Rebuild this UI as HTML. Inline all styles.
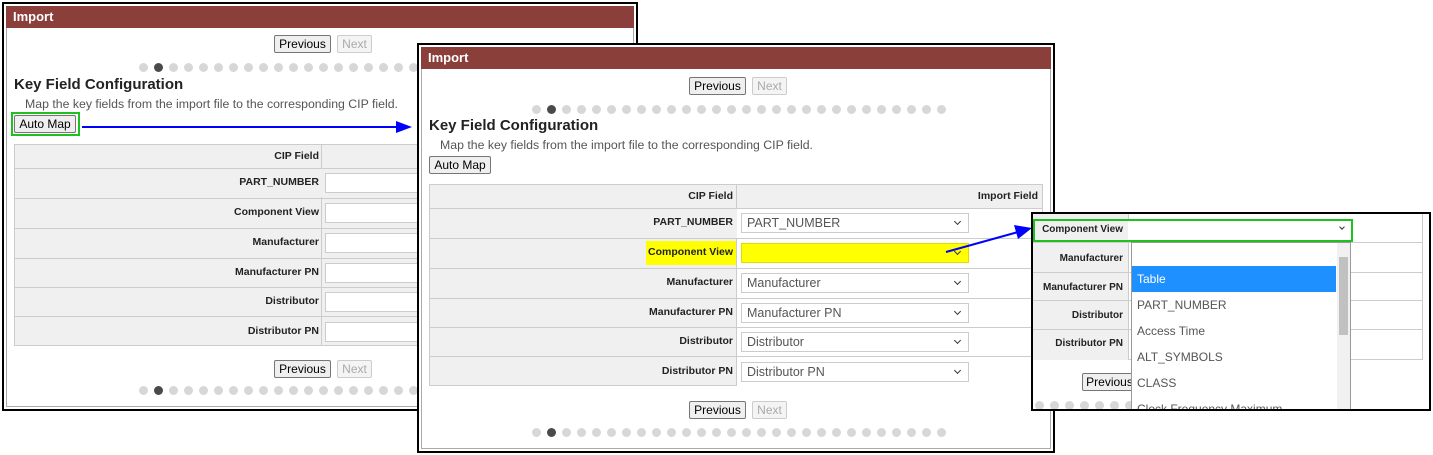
<!DOCTYPE html>
<html><head><meta charset="utf-8"><style>
*{box-sizing:border-box;margin:0;padding:0}
body{width:1433px;height:455px;background:#fff;position:relative;overflow:hidden;font-family:"Liberation Sans",sans-serif}
.a{position:absolute}
.panel{position:absolute;border:2px solid #000;background:#fff;overflow:hidden}
.hdr{position:absolute;left:2px;right:2px;top:2px;height:22px;background:#8b3f3b;color:#fff;font-weight:bold;font-size:13px;line-height:22px;padding-left:7px}
.inner{position:absolute;left:2px;right:2px;top:24px;bottom:2px;border:1px solid #aaa;border-top:none}
.btn{position:absolute;height:18px;border:1px solid #767676;background:#efefef;font-size:12px;line-height:16px;text-align:center;color:#000;border-radius:2px}
.btn.dis{color:#aaa;border-color:#ccc;background:#f4f4f4}
.dots{position:absolute;height:10px;white-space:nowrap}
.dots i{display:inline-block;width:9px;height:9px;border-radius:50%;background:#d7d7d7;margin-right:6px}
.dots i.on{background:#4a4a4a}
.title{position:absolute;font-size:15px;font-weight:bold;color:#222}
.sub{position:absolute;font-size:12.3px;color:#555}
.tbl{position:absolute;border:1px solid #ccc;background:#f0f0f0}
.row{position:absolute;left:0;right:0;border-top:1px solid #ccc}
.lbl{position:absolute;font-size:10.5px;font-weight:bold;color:#222;text-align:right;white-space:nowrap}
.sel{position:absolute;height:20px;border:1px solid #ccc;background:#fff;font-size:12.5px;color:#555;line-height:18px;padding-left:5px}
.sel:after{content:"";position:absolute;right:8px;top:5px;width:4px;height:4px;border-right:1.5px solid #333;border-bottom:1.5px solid #333;transform:rotate(45deg)}
.inp{position:absolute;height:20px;border:1px solid #ccc;background:#fff}
.dd div{height:26px;line-height:26px;padding-left:5px;font-size:12px;color:#555}
</style></head><body>

<!-- Panel 1 -->
<div class="panel" style="left:2px;top:2px;width:636px;height:409px">
 <div class="hdr">Import</div><div class="inner"></div>
 <div class="btn" style="left:270px;top:31px;width:57px">Previous</div>
 <div class="btn dis" style="left:333px;top:31px;width:35px">Next</div>
 <div class="dots" style="left:135px;top:55px;width:600px"><i></i><i class="on"></i><i></i><i></i><i></i><i></i><i></i><i></i><i></i><i></i><i></i><i></i><i></i><i></i><i></i><i></i><i></i><i></i><i></i><i></i><i></i><i></i><i></i><i></i></div>
 <div class="title" style="left:10px;top:72px">Key Field Configuration</div>
 <div class="sub" style="left:21px;top:93px">Map the key fields from the import file to the corresponding CIP field.</div>
 <div class="a" style="left:7px;top:108px;width:69px;height:24px;border:2px solid #1fc11f"></div>
 <div class="btn" style="left:10px;top:111px;width:62px">Auto Map</div>
 <div class="tbl" style="left:10px;top:140px;width:640px;height:202px">
  <div class="a" style="left:306px;top:0;bottom:0;width:1px;background:#ccc"></div>
  <div class="a" style="left:307px;top:0;width:400px;height:23px;background:#f0f0f0"></div>
  <div class="lbl" style="right:334px;top:5px">CIP Field</div>
  <div class="row" style="top:23px;height:29px;background:#f0f0f0"><div class="lbl" style="right:334px;top:7px">PART_NUMBER</div><div class="inp" style="left:310px;top:4px;width:300px"></div></div>
  <div class="row" style="top:53px;height:29px"><div class="lbl" style="right:334px;top:7px">Component View</div><div class="inp" style="left:310px;top:4px;width:300px"></div></div>
  <div class="row" style="top:83px;height:29px"><div class="lbl" style="right:334px;top:7px">Manufacturer</div><div class="inp" style="left:310px;top:4px;width:300px"></div></div>
  <div class="row" style="top:113px;height:29px"><div class="lbl" style="right:334px;top:7px">Manufacturer PN</div><div class="inp" style="left:310px;top:4px;width:300px"></div></div>
  <div class="row" style="top:142px;height:29px"><div class="lbl" style="right:334px;top:7px">Distributor</div><div class="inp" style="left:310px;top:4px;width:300px"></div></div>
  <div class="row" style="top:171px;height:30px"><div class="lbl" style="right:334px;top:8px">Distributor PN</div><div class="inp" style="left:310px;top:5px;width:300px"></div></div>
 </div>
 <div class="btn" style="left:270px;top:356px;width:57px">Previous</div>
 <div class="btn dis" style="left:333px;top:356px;width:35px">Next</div>
 <div class="dots" style="left:135px;top:378px;width:600px"><i></i><i class="on"></i><i></i><i></i><i></i><i></i><i></i><i></i><i></i><i></i><i></i><i></i><i></i><i></i><i></i><i></i><i></i><i></i><i></i><i></i><i></i><i></i><i></i><i></i></div>
</div>

<!-- arrow 1 -->
<svg class="a" style="left:0;top:0" width="1433" height="455"><line x1="82" y1="127" x2="398" y2="127" stroke="#0000ff" stroke-width="2"/><polygon points="396,121 412,127 396,133" fill="#0000ff"/></svg>

<!-- Panel 2 -->
<div class="panel" style="left:417px;top:43px;width:638px;height:410px">
 <div class="hdr">Import</div><div class="inner"></div>
 <div class="btn" style="left:270px;top:32px;width:57px">Previous</div>
 <div class="btn dis" style="left:333px;top:32px;width:35px">Next</div>
 <div class="dots" style="left:113px;top:56px;width:600px"><i></i><i class="on"></i><i></i><i></i><i></i><i></i><i></i><i></i><i></i><i></i><i></i><i></i><i></i><i></i><i></i><i></i><i></i><i></i><i></i><i></i><i></i><i></i><i></i><i></i><i></i><i></i><i></i><i></i></div>
 <div class="title" style="left:10px;top:72px">Key Field Configuration</div>
 <div class="sub" style="left:21px;top:93px">Map the key fields from the import file to the corresponding CIP field.</div>
 <div class="btn" style="left:10px;top:111px;width:62px">Auto Map</div>
 <div class="tbl" style="left:10px;top:139px;width:614px;height:202px">
  <div class="a" style="left:306px;top:0;bottom:0;width:1px;background:#ccc"></div>
  <div class="a" style="left:307px;top:0;right:0;height:23px;background:#f0f0f0"></div>
  <div class="lbl" style="right:309px;top:5px">CIP Field</div>
  <div class="lbl" style="right:4px;top:5px">Import Field</div>
  <div class="row" style="top:23px;height:30px;background:#f0f0f0"><div class="a" style="left:307px;right:0;top:0;bottom:0;background:#fff"></div><div class="lbl" style="right:309px;top:7px">PART_NUMBER</div><div class="sel" style="left:311px;top:4px;width:228px">PART_NUMBER</div></div>
  <div class="row" style="top:53px;height:30px"><div class="a" style="left:307px;right:0;top:0;bottom:0;background:#fff"></div><div class="a" style="left:216px;top:2px;width:90px;height:24px;background:#ffff00"></div><div class="lbl" style="right:309px;top:7px">Component View</div><div class="sel" style="left:311px;top:4px;width:228px;background:#ffff00;border-color:#dddd00"></div></div>
  <div class="row" style="top:83px;height:30px"><div class="a" style="left:307px;right:0;top:0;bottom:0;background:#fff"></div><div class="lbl" style="right:309px;top:7px">Manufacturer</div><div class="sel" style="left:311px;top:4px;width:228px">Manufacturer</div></div>
  <div class="row" style="top:113px;height:30px"><div class="a" style="left:307px;right:0;top:0;bottom:0;background:#fff"></div><div class="lbl" style="right:309px;top:7px">Manufacturer PN</div><div class="sel" style="left:311px;top:4px;width:228px">Manufacturer PN</div></div>
  <div class="row" style="top:142px;height:30px"><div class="a" style="left:307px;right:0;top:0;bottom:0;background:#fff"></div><div class="lbl" style="right:309px;top:7px">Distributor</div><div class="sel" style="left:311px;top:4px;width:228px">Distributor</div></div>
  <div class="row" style="top:171px;height:30px"><div class="a" style="left:307px;right:0;top:0;bottom:0;background:#fff"></div><div class="lbl" style="right:309px;top:8px">Distributor PN</div><div class="sel" style="left:311px;top:5px;width:228px">Distributor PN</div></div>
 </div>
 <div class="btn" style="left:270px;top:356px;width:57px">Previous</div>
 <div class="btn dis" style="left:333px;top:356px;width:35px">Next</div>
 <div class="dots" style="left:113px;top:379px;width:600px"><i></i><i class="on"></i><i></i><i></i><i></i><i></i><i></i><i></i><i></i><i></i><i></i><i></i><i></i><i></i><i></i><i></i><i></i><i></i><i></i><i></i><i></i><i></i><i></i><i></i><i></i><i></i><i></i><i></i></div>
</div>

<!-- arrow 2 -->
<svg class="a" style="left:0;top:0" width="1433" height="455"><line x1="946" y1="252" x2="1018" y2="232" stroke="#0000ff" stroke-width="2"/><polygon points="1014,225 1032,228 1018,239" fill="#0000ff"/></svg>

<!-- Panel 3 -->
<div class="panel" style="left:1031px;top:212px;width:400px;height:199px">
 <div class="a" style="left:0;top:0;width:390px;height:146px;border-right:1px solid #ccc;border-bottom:1px solid #ccc"></div>
 <div class="a" style="left:0;top:0;width:96px;height:146px;background:#f0f0f0;border-right:1px solid #ccc"></div>
 <div class="a" style="left:0;top:28px;width:390px;height:1px;background:#ccc"></div>
 <div class="a" style="left:0;top:58px;width:390px;height:1px;background:#ccc"></div>
 <div class="a" style="left:0;top:86px;width:390px;height:1px;background:#ccc"></div>
 <div class="a" style="left:0;top:115px;width:390px;height:1px;background:#ccc"></div>
 <div class="a" style="left:0;top:5px;width:320px;height:23px;border:2px solid #1fc11f;background:#fff"></div>
 <div class="a" style="left:2px;top:7px;width:93px;height:19px;background:#f0f0f0"></div>
 <div class="lbl" style="right:306px;top:10px;font-size:10px">Component View</div>
 <div class="a" style="left:307px;top:11px;width:4px;height:4px;border-right:1.5px solid #333;border-bottom:1.5px solid #333;transform:rotate(45deg)"></div>
 <div class="lbl" style="right:306px;top:39px;font-size:10px">Manufacturer</div>
 <div class="lbl" style="right:306px;top:68px;font-size:10px">Manufacturer PN</div>
 <div class="lbl" style="right:306px;top:96px;font-size:10px">Distributor</div>
 <div class="lbl" style="right:306px;top:124px;font-size:10px">Distributor PN</div>
 <div class="btn" style="left:49px;top:159px;width:55px">Previous</div>
 <div class="dots" style="left:2px;top:183px;width:100px"><i></i><i></i><i></i><i></i><i></i><i></i><i></i><i></i></div>
 <div class="a dd" style="left:98px;top:28px;width:220px;height:180px;background:#fff;border:1px solid #999;overflow:hidden">
  <div style="height:23px"></div>
  <div style="background:#1e90ff;color:#fff;margin-right:14px">Table</div>
  <div>PART_NUMBER</div><div>Access Time</div><div>ALT_SYMBOLS</div><div>CLASS</div><div>Clock Frequency Maximum</div>
  <div class="a" style="right:0;top:0;width:13px;height:180px;background:#f1f1f1;padding:0"></div>
  <div class="a" style="right:2px;top:14px;width:9px;height:78px;background:#c1c1c1;padding:0"></div>
 </div>
</div>
</body></html>
